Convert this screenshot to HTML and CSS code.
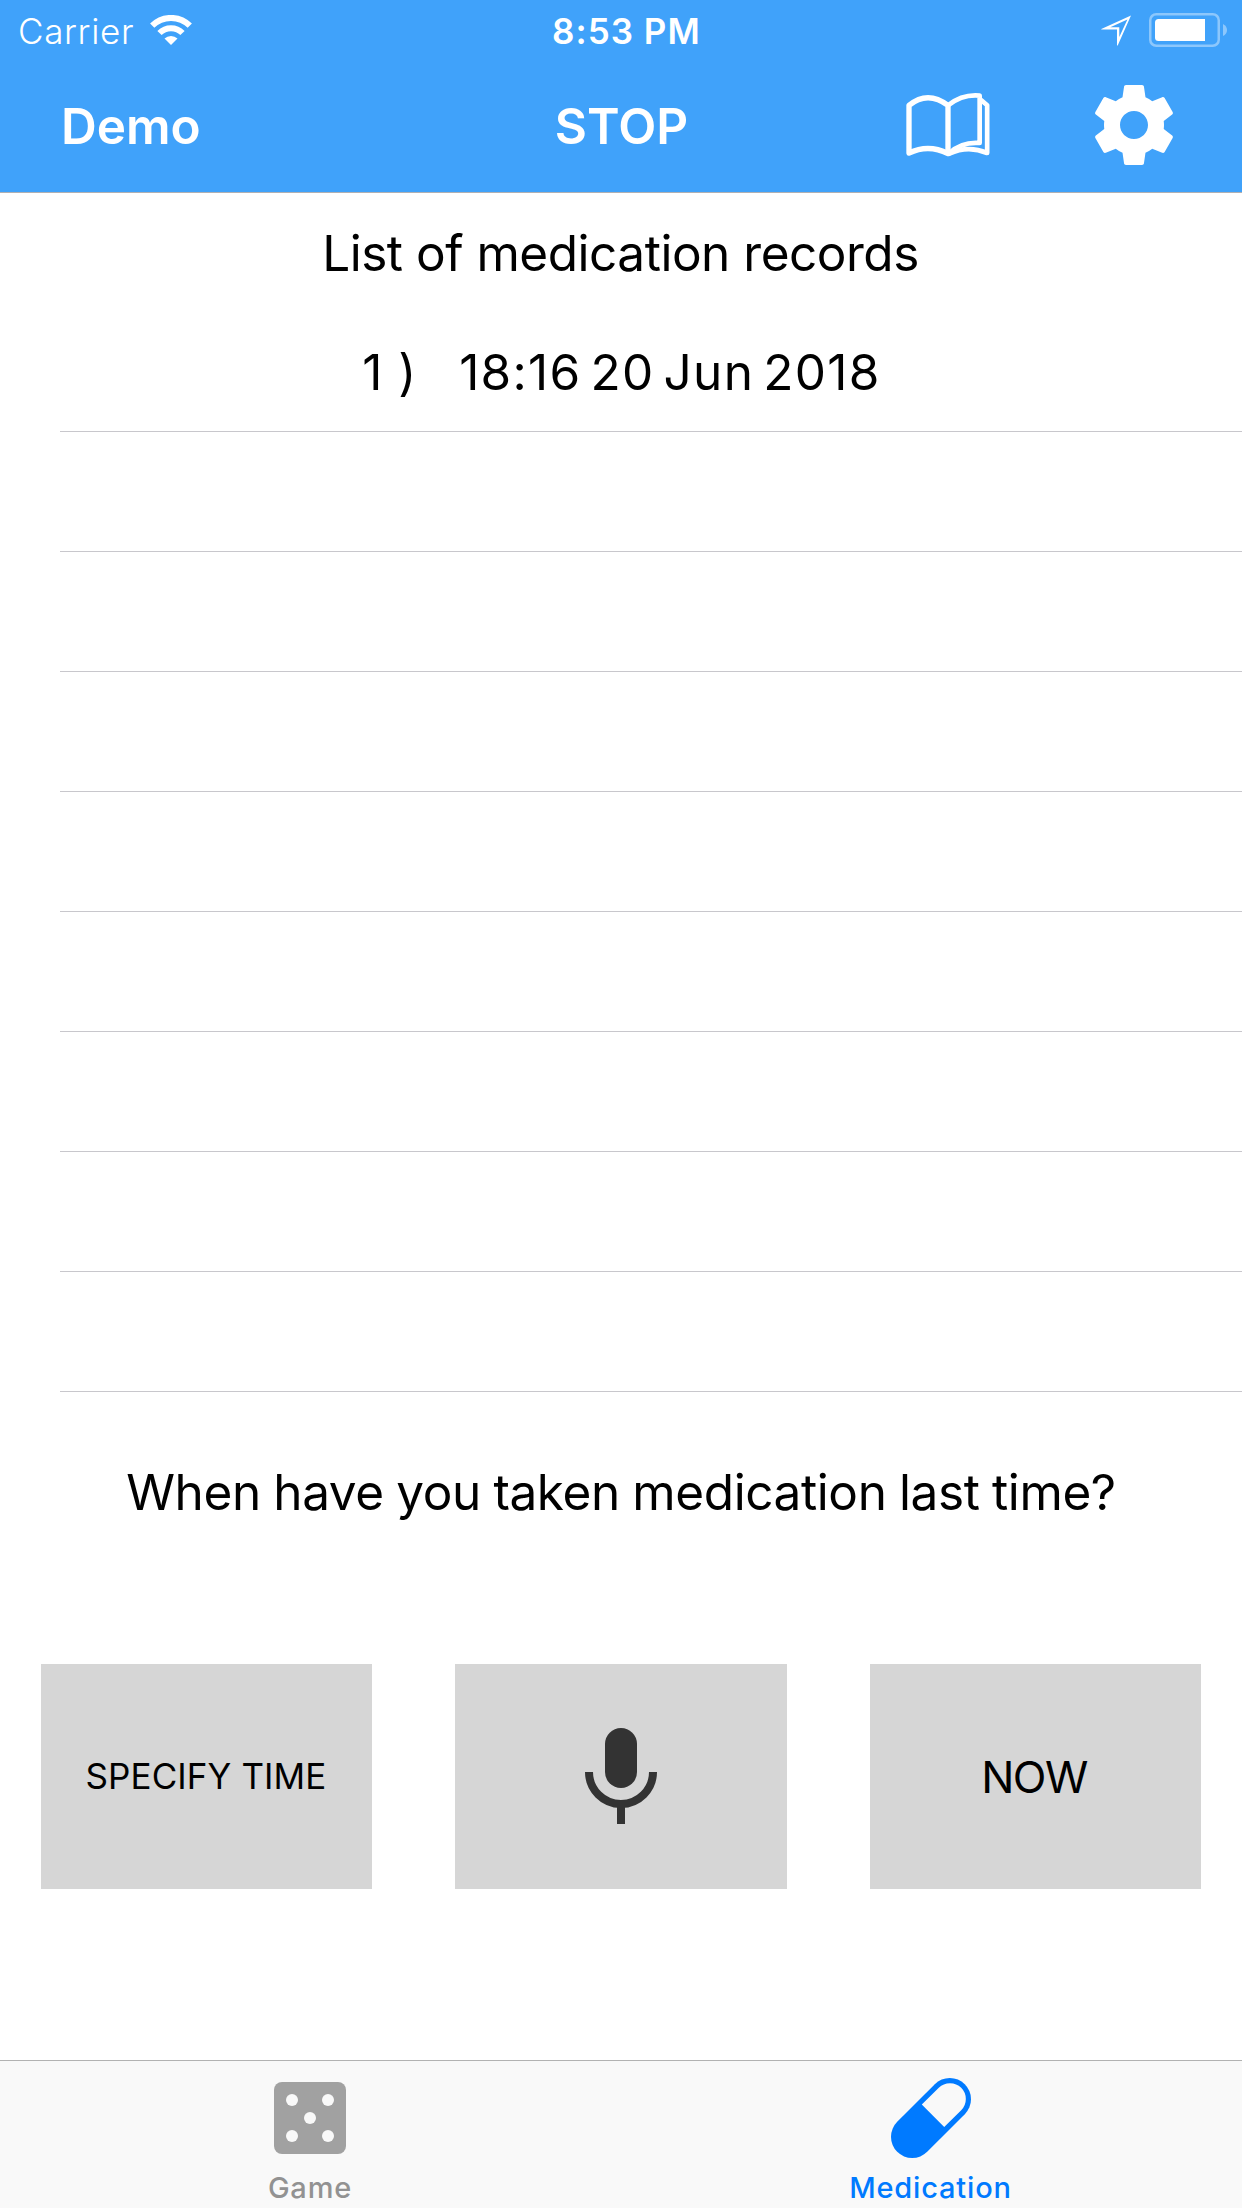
FILE: index.html
```html
<!DOCTYPE html>
<html lang="en">
<head>
<meta charset="utf-8">
<title>Medication</title>
<link rel="stylesheet" href="styles.css">
</head>
<body>
<div class="screen">
  <header class="top">
    <div class="status">
      <div class="status-left">
        <span class="carrier">Carrier</span>
        <svg class="wifi" width="42" height="30" viewBox="150 15 42 30">
          <g fill="none" stroke="#fff" stroke-width="6">
            <path d="M152.2 25.7A26.6 26.6 0 0 1 189.8 25.7"/>
            <path d="M159.5 33A16.2 16.2 0 0 1 182.5 33"/>
          </g>
          <path d="M171 45L164.5 38.6A9.3 9.3 0 0 1 177.5 38.6Z" fill="#fff"/>
        </svg>
      </div>
      <span class="clock">8:53 PM</span>
      <div class="status-right">
        <svg width="30" height="31" viewBox="1101 15.5 30 31">
          <path fill="#fff" fill-rule="evenodd" d="M1131 16L1101.3 29.4V30H1117V46H1117.7ZM1127.4 19.9L1110.3 27.7H1119.3V37.5Z"/>
        </svg>
        <svg width="78" height="34" viewBox="0 0 78 34">
          <rect x="1.25" y="1.25" width="68.5" height="31.5" rx="6" fill="none" stroke="#fff" stroke-opacity=".4" stroke-width="2.5"/>
          <path d="M9.500 6H56V28H9.500Q6 28 6 24.500V9.500Q6 6 9.500 6Z" fill="#fff"/>
          <path d="M74 11Q78 13 78 17T74 23Z" fill="#fff" fill-opacity=".4"/>
        </svg>
      </div>
    </div>
    <nav class="nav">
      <span class="nav-left">Demo</span>
      <span class="nav-title">STOP</span>
      <div class="nav-right">
        <svg class="book" width="84" height="65" viewBox="78 277 252 195" fill="none" stroke="#fff" stroke-linejoin="round" stroke-linecap="round">
          <path stroke-width="16" d="M87 460V317Q143 271 204 317V462Q146 432 87 460Z"/>
          <path stroke-width="14" d="M204 317Q248 283 299 288V430Q245 426 209 460"/>
          <path stroke-width="14" d="M304 302L321.500 317V460Q264 436 208 462"/>
        </svg>
        <svg width="96" height="96" viewBox="0 0 24 24" fill="#fff">
          <path d="M19.43 12.98c.04-.32.07-.64.07-.98s-.03-.66-.07-.98l2.110-1.650c.19-.15.24-.42.12-.64l-2-3.460c-.12-.22-.39-.3-.61-.22l-2.490 1c-.52-.4-1.080-.73-1.690-.98l-.38-2.650C14.460 2.180 14.250 2 14 2h-4c-.25 0-.46.18-.49.42l-.38 2.650c-.61.25-1.170.59-1.690.98l-2.490-1c-.23-.09-.49 0-.61.22l-2 3.460c-.13.22-.07.49.12.64l2.110 1.650c-.04.32-.07.65-.07.98s.03.66.07.98l-2.110 1.650c-.19.15-.24.42-.12.64l2 3.460c.12.22.39.3.61.22l2.490-1c.52.4 1.080.73 1.690.98l.38 2.650c.03.24.24.42.49.42h4c.25 0 .46-.18.49-.42l.38-2.650c.61-.25 1.170-.59 1.690-.98l2.490 1c.23.09.49 0 .61-.22l2-3.460c.12-.22.07-.49-.12-.64l-2.110-1.650zM12 15.500c-1.930 0-3.500-1.570-3.500-3.500s1.570-3.500 3.500-3.500 3.500 1.570 3.500 3.500-1.570 3.500-3.500 3.500z"/>
        </svg>
      </div>
    </nav>
  </header>

  <main class="content">
    <h1 class="heading">List of medication records</h1>
    <ul class="records">
      <li class="record"><span class="number">1 )</span><span class="date">18:16 20 Jun 2018</span></li>
      <li class="record"></li>
      <li class="record"></li>
      <li class="record"></li>
      <li class="record"></li>
      <li class="record"></li>
      <li class="record"></li>
      <li class="record"></li>
      <li class="record"></li>
    </ul>
    <p class="question">When have you taken medication last time?</p>
    <div class="actions">
      <button class="action specify">SPECIFY TIME</button>
      <button class="action speak" aria-label="Speak">
        <svg width="72" height="96" viewBox="0 0 72 96">
          <rect x="20" width="32" height="60" rx="16" fill="#333"/>
          <path d="M4 44A32 32 0 0 0 68 44M36 76V96" fill="none" stroke="#333" stroke-width="8"/>
        </svg>
      </button>
      <button class="action now">NOW</button>
    </div>
  </main>

  <footer class="tabs">
    <div class="tab">
      <svg width="72" height="80" viewBox="0 -4 72 80">
        <rect width="72" height="72" rx="8" fill="#a1a1a1"/>
        <g fill="#f9f9f9">
          <circle cx="18" cy="18" r="6"/><circle cx="54" cy="18" r="6"/><circle cx="36" cy="36" r="6"/>
          <circle cx="18" cy="54" r="6"/><circle cx="54" cy="54" r="6"/>
        </g>
      </svg>
      <span class="label">Game</span>
    </div>
    <div class="tab active">
      <svg width="80" height="80" viewBox="0 0 80 80">
        <path d="M21.200 58.800L58.800 21.200" stroke="#007aff" stroke-width="42.400" stroke-linecap="round"/>
        <path d="M30.800 26.600L47.800 9.800A15.800 15.800 0 0 1 70.200 32.200L53.200 49Z" fill="#f9f9f9"/>
      </svg>
      <span class="label">Medication</span>
    </div>
  </footer>
</div>
</body>
</html>
```
FILE: styles.css
```css
* { box-sizing: border-box; }
body { margin: 0; background: #fff; }
svg { display: block; flex: none; }

.screen {
  width: 1242px;
  height: 2208px;
  display: flex;
  flex-direction: column;
  overflow: hidden;
  background: #fff;
  color: #000;
  font-family: Inter, "Liberation Sans", sans-serif;
  font-size: 49.5px;
  white-space: nowrap;
}

/* Status bar and navigation bar */
.top {
  height: 193px;
  flex: none;
  background: #40a2fa;
  border-bottom: 1px solid #b0b0b3;
  color: #fff;
}
.status {
  height: 60px;
  padding: 0 15px 0 18px;
  display: grid;
  grid-template-columns: 534px 1fr auto;
  align-items: center;
  font-size: 35px;
  line-height: 42px;
}
.status-left { display: flex; align-items: center; padding-top: 2px; }
.carrier { width: 132px; font-weight: 300; letter-spacing: 0.66px; }
.wifi { margin-top: -3px; }
.clock { padding-top: 2px; font-weight: 600; letter-spacing: 1.04px; }
.status-right { display: flex; align-items: center; gap: 18px; }

.nav {
  height: 132px;
  padding: 0 60px 0 61px;
  display: grid;
  grid-template-columns: 1fr auto 1fr;
  align-items: center;
  line-height: 60px;
}
.nav-left { font-weight: 600; }
.nav-title { font-weight: 600; }
.nav-right { display: flex; align-items: center; justify-content: flex-end; gap: 96px; margin-top: -2px; }
.book { margin-bottom: 1px; }

/* Records */
.content { flex: 1; }
.heading {
  margin: 0;
  height: 119px;
  padding-right: 1px;
  line-height: 120px;
  font-size: inherit;
  font-weight: 400;
  letter-spacing: -0.48px;
  text-align: center;
}
.records { margin: 0; padding: 0 0 0 60px; list-style: none; }
.record {
  height: 120px;
  padding: 1px 59px 0 0;
  border-bottom: 1px solid #c8c7cc;
  display: flex;
  align-items: center;
  justify-content: center;
  gap: 42px;
}
.number { letter-spacing: 0.9px; }
.date { letter-spacing: 1.3px; word-spacing: -6.2px; }

.question {
  margin: 70px 0 0;
  line-height: 60px;
  letter-spacing: -0.4px;
  word-spacing: -1px;
  text-align: center;
}
.actions {
  margin-top: 142px;
  padding: 0 41px;
  display: grid;
  grid-template-columns: 331px 332px 331px;
  justify-content: space-between;
}
.action {
  height: 225px;
  margin: 0;
  padding: 0;
  border: 0;
  display: flex;
  align-items: center;
  justify-content: center;
  background: #d6d6d6;
  color: #000;
  font-family: inherit;
}
.specify { padding: 0 1px 2px 0; font-size: 35px; letter-spacing: 0.1px; }
.speak { padding-bottom: 1px; }
.now { padding-right: 3px; font-size: 44px; letter-spacing: -1.6px; }

/* Tab bar */
.tabs {
  height: 148px;
  flex: none;
  padding-right: 1px;
  display: grid;
  grid-template-columns: 620px 1fr;
  background: #f9f9f9;
  border-top: 1px solid #b2b2b2;
}
.tab {
  padding-top: 17px;
  display: flex;
  flex-direction: column;
  align-items: center;
  color: #929292;
}
.tab.active { color: #007aff; }
.label {
  margin-top: 12px;
  line-height: 36px;
  font-size: 29px;
  font-weight: 500;
  letter-spacing: 0.82px;
}
```
